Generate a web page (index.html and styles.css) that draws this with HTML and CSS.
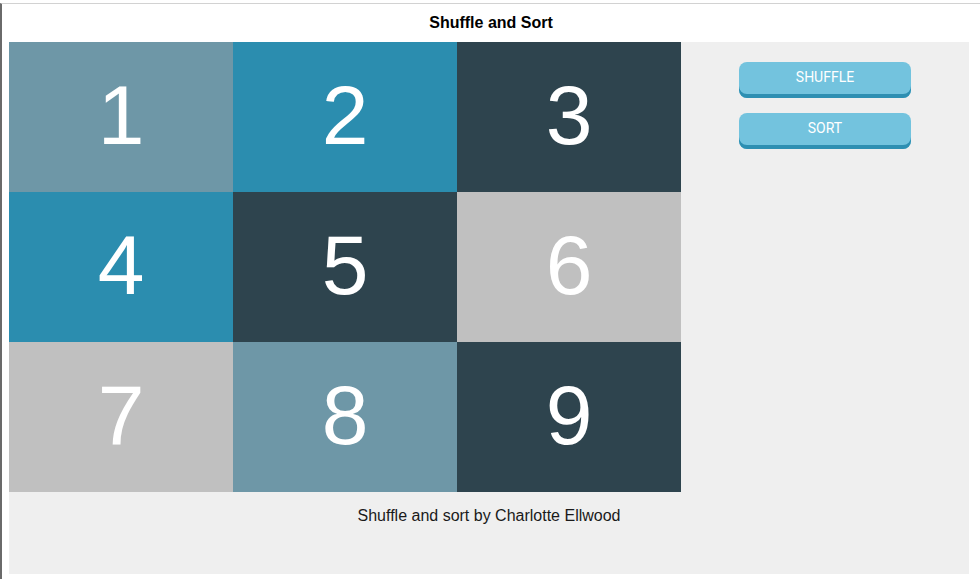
FILE: index.html
```html
<!DOCTYPE html>
<html>
<head>
<meta charset="utf-8">
<title>Shuffle and Sort</title>
<link rel="stylesheet" href="styles.css">
</head>
<body>
<div class="frame">
  <header class="title">Shuffle and Sort</header>
  <main class="main">
    <div class="row">
      <div class="grid">
        <div class="tile c1">1</div>
        <div class="tile c2">2</div>
        <div class="tile c3">3</div>
        <div class="tile c2">4</div>
        <div class="tile c3">5</div>
        <div class="tile c4">6</div>
        <div class="tile c4">7</div>
        <div class="tile c1">8</div>
        <div class="tile c3">9</div>
      </div>
      <div class="side">
        <button class="btn">SHUFFLE</button>
        <button class="btn">SORT</button>
      </div>
    </div>
    <p class="footer">Shuffle and sort by Charlotte Ellwood</p>
  </main>
</div>
</body>
</html>
```
FILE: styles.css
```css
html, body {
  margin: 0;
  padding: 0;
  background: #ffffff;
}
body {
  font-family: "Liberation Sans", Arial, sans-serif;
  width: 980px;
  height: 579px;
  overflow: hidden;
}
.frame {
  margin-top: 3px;
  border-top: 1px solid #d2d2d2;
  border-left: 2px solid #6a6a6a;
  height: 576px;
  box-sizing: border-box;
}
.title {
  height: 38px;
  display: flex;
  align-items: center;
  justify-content: center;
  font-weight: bold;
  font-size: 16px;
  color: #000;
}
.main {
  margin-left: 7px;
  width: 960px;
  height: 532px;
  background: #efefef;
}
.row {
  display: flex;
}
.grid {
  display: grid;
  grid-template-columns: repeat(3, 224px);
  grid-template-rows: repeat(3, 150px);
}
.tile {
  display: flex;
  align-items: center;
  justify-content: center;
  color: #ffffff;
  font-size: 84px;
  line-height: 1;
  padding-bottom: 5px;
}
.c1 { background: #6e97a7; }
.c2 { background: #2b8daf; }
.c3 { background: #2e444e; }
.c4 { background: #c0c0c0; }
.side {
  flex: 1;
  display: flex;
  flex-direction: column;
  align-items: center;
  padding-top: 20px;
  gap: 15px;
}
.btn {
  width: 172px;
  height: 36px;
  padding: 0 0 6px 0;
  border: none;
  border-radius: 8px;
  background: #73c3de;
  box-shadow: inset 0 -4px 0 #2e8fb2;
  color: #ffffff;
  font-family: Roboto, "Liberation Sans", sans-serif;
  font-size: 14px;
  cursor: pointer;
}
.footer {
  margin: 0;
  padding-top: 15px;
  text-align: center;
  font-size: 16px;
  line-height: 18px;
  color: #1a1a1a;
}
```
